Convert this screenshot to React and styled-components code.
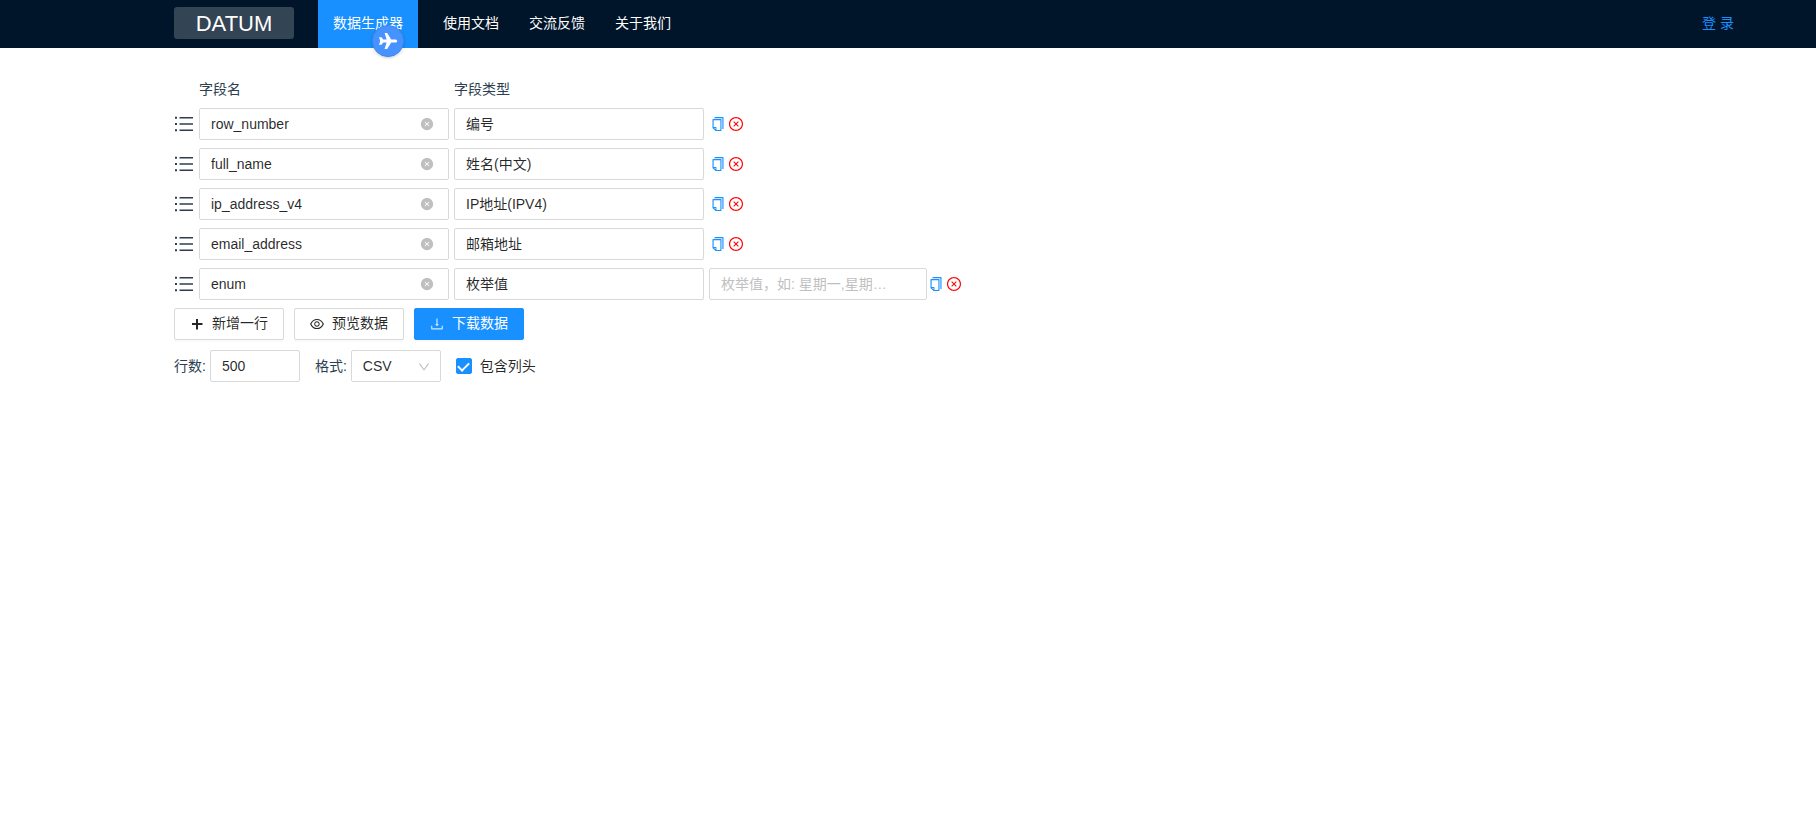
import { useState } from "react";
import styled, { createGlobalStyle } from "styled-components";
import {
  AiOutlineCopy,
  AiOutlineCloseCircle,
  AiFillCloseCircle,
  AiOutlineEye,
  AiOutlineDownload,
  AiOutlineDown,
} from "react-icons/ai";

const GlobalStyle = createGlobalStyle`
  * {
    box-sizing: border-box;
  }
  body {
    margin: 0;
    background: #fff;
    color: #2c3e50;
    font-size: 14px;
    line-height: 22px;
  }
  body, button, input, select {
    font-family: "Liberation Sans", Arial, "Noto Sans CJK SC", sans-serif;
  }
`;

// top bar
const Header = styled.header`
  position: relative;
  display: flex;
  align-items: flex-start;
  height: 48px;
  padding: 0 67px 0 174px;
  background: #001529;
`;
const Logo = styled.div`
  width: 120px;
  height: 32px;
  margin: 7px 24px 0 0;
  border-radius: 3px;
  background: #334454;
  color: #fff;
  font-size: 22px;
  line-height: 34px;
  text-align: center;
`;
const Nav = styled.nav`
  display: flex;
  flex: 1;
`;
const NavLink = styled.a`
  height: 48px;
  padding: 0 15px;
  margin-right: ${(props) => (props.$active ? "10px" : "0")};
  background: ${(props) => (props.$active ? "#1890ff" : "transparent")};
  color: #fff;
  line-height: 46px;
  text-decoration: none;
`;
const LoginButton = styled.button`
  height: 46px;
  padding: 0 15px;
  border: none;
  background: transparent;
  color: #1890ff;
  font-size: 14px;
  line-height: 46px;
  cursor: pointer;
`;
// floats over the menu and hangs below the bar
const FloatButton = styled.button`
  position: absolute;
  top: 25px;
  left: 372px;
  display: flex;
  align-items: center;
  justify-content: center;
  width: 32px;
  height: 32px;
  padding: 0;
  border: 1px solid #3c88f5;
  border-radius: 50%;
  background: #4693ff;
  box-shadow: 0 1px 3px rgba(0, 0, 0, 0.2);
  color: #fff;
  cursor: pointer;
`;

// field editor
const Content = styled.main`
  display: flex;
  flex-direction: column;
  gap: 8px;
  padding: 30px 66px 30px 174px;
`;
const HeadRow = styled.div`
  display: flex;
  gap: 5px;
  padding-left: 25px;
`;
const HeadCell = styled.div`
  width: 250px;
`;
const Row = styled.div`
  display: flex;
  align-items: center;
`;
const Handle = styled.span`
  display: flex;
  margin-right: 5px;
`;
const InputBox = styled.div`
  display: flex;
  align-items: flex-start;
  width: ${(props) => props.$width};
  height: 32px;
  margin-right: ${(props) => props.$gap || "0"};
  padding: 0 11px;
  border: 1px solid #d9d9d9;
  border-radius: 2px;
  background: #fff;
`;
const Input = styled.input`
  flex: 1;
  min-width: 0;
  height: ${(props) => (props.readOnly ? "28px" : "30px")};
  padding: 0;
  border: none;
  outline: none;
  background: transparent;
  color: rgba(0, 0, 0, 0.85);
  font-size: 14px;
  text-overflow: ellipsis;
  &::placeholder {
    color: #bfbfbf;
  }
`;
const IconButton = styled.button`
  display: flex;
  align-self: center;
  margin: ${(props) => props.$margin || "0"};
  padding: 0;
  border: none;
  background: transparent;
  color: ${(props) => props.$color};
  font-size: ${(props) => props.$size};
  cursor: pointer;
`;
const Actions = styled.div`
  display: flex;
  gap: 2px;
  margin-left: 1px;
`;

const ButtonRow = styled.div`
  display: flex;
  gap: 10px;
`;
const Button = styled.button`
  display: flex;
  align-items: center;
  gap: 7px;
  height: 32px;
  padding: 0 15px 0 14px;
  border: 1px solid ${(props) => (props.$primary ? "#1890ff" : "#d9d9d9")};
  border-radius: 2px;
  background: ${(props) => (props.$primary ? "#1890ff" : "#fff")};
  box-shadow: 0 2px 0 rgba(0, 0, 0, 0.02);
  color: ${(props) => (props.$primary ? "#fff" : "rgba(0, 0, 0, 0.85)")};
  font-size: 14px;
  line-height: 28px;
  cursor: pointer;
  svg {
    width: 16px;
    height: 16px;
    opacity: ${(props) => (props.$primary ? 0.8 : 1)};
  }
`;
const ButtonText = styled.span`
  height: 30px;
`;

const Options = styled.div`
  display: flex;
  align-items: center;
  gap: 15px;
  margin-top: 2px;
`;
const Option = styled.div`
  display: flex;
  align-items: center;
  gap: 4px;
`;
const SelectBox = styled.div`
  position: relative;
  width: 90px;
  height: 32px;
  svg {
    position: absolute;
    top: 10px;
    right: 10px;
    color: #bfbfbf;
    font-size: 14px;
    pointer-events: none;
  }
`;
const Select = styled.select`
  appearance: none;
  width: 100%;
  height: 100%;
  padding: 0 11px;
  border: 1px solid #d9d9d9;
  border-radius: 2px;
  background: #fff;
  color: rgba(0, 0, 0, 0.85);
  font-size: 14px;
`;
const CheckLabel = styled.label`
  display: flex;
  align-items: center;
  gap: 8px;
  color: rgba(0, 0, 0, 0.85);
`;
const Checkbox = styled.input`
  appearance: none;
  display: grid;
  place-items: center;
  width: 16px;
  height: 16px;
  margin: 0;
  border: 1px solid #d9d9d9;
  border-radius: 2px;
  &:checked {
    border-color: #1890ff;
    background: #1890ff;
  }
  &:checked::after {
    content: "";
    width: 5px;
    height: 9px;
    margin-bottom: 2px;
    border: 2px solid #fff;
    border-top: 0;
    border-left: 0;
    transform: rotate(45deg);
  }
`;

const menu = ["数据生成器", "使用文档", "交流反馈", "关于我们"];

const initialFields = [
  { id: 1, name: "row_number", type: "编号" },
  { id: 2, name: "full_name", type: "姓名(中文)" },
  { id: 3, name: "ip_address_v4", type: "IP地址(IPV4)" },
  { id: 4, name: "email_address", type: "邮箱地址" },
  { id: 5, name: "enum", type: "枚举值", hint: "枚举值，如: 星期一,星期…" },
];

const PlaneIcon = () => (
  <svg width="20" height="18" viewBox="0 0 20 18" fill="currentColor">
    <path d="M19.200 9c0 1-.9 1.600-2 1.600h-4L9.200 17H6.600l2-6.400H5.200L3.600 12.800H1L2.200 9 1 5.200h2.600l1.600 2.200h3.400L6.600 1h2.600l4 6.400h4c1.100 0 2 .6 2 1.600z" />
  </svg>
);

const ListIcon = () => (
  <svg width="20" height="20" viewBox="0 0 20 20" fill="currentColor">
    <path d="M1 2.700h2v2H1zM1 9h2v2H1zM1 15.200h2v2H1z" />
    <path d="M5.500 2.900H19v1.600H5.500zM5.500 9.200H19v1.600H5.500zM5.500 15.400H19V17H5.500z" />
  </svg>
);

const PlusIcon = () => (
  <svg viewBox="0 0 16 16" fill="currentColor">
    <path d="M7 3h2v4h4.500v2H9v4.500H7V9H3V7h4z" />
  </svg>
);

const FieldRow = ({ field, onRename, onCopy, onRemove }) => {
  return (
    <Row>
      <Handle>
        <ListIcon />
      </Handle>
      <InputBox $width="250px" $gap="5px">
        <Input
          aria-label="字段名"
          value={field.name}
          onChange={(e) => onRename(field.id, e.target.value)}
        />
        <IconButton
          aria-label="清空"
          $color="#bfbfbf"
          $size="14px"
          $margin="0 3px 0 0"
          onClick={() => onRename(field.id, "")}
        >
          <AiFillCloseCircle />
        </IconButton>
      </InputBox>
      <InputBox $width="250px" $gap="5px">
        <Input aria-label="字段类型" value={field.type} readOnly />
      </InputBox>
      {field.hint && (
        <InputBox $width="218px">
          <Input aria-label="枚举值" placeholder={field.hint} />
        </InputBox>
      )}
      <Actions>
        <IconButton aria-label="复制" $color="#1890ff" $size="16px" onClick={() => onCopy(field)}>
          <AiOutlineCopy />
        </IconButton>
        <IconButton aria-label="删除" $color="#ff0000" $size="16px" onClick={() => onRemove(field.id)}>
          <AiOutlineCloseCircle />
        </IconButton>
      </Actions>
    </Row>
  );
};

export default function App() {
  const [fields, setFields] = useState(initialFields);

  const rename = (id, name) =>
    setFields(fields.map((f) => (f.id === id ? { ...f, name } : f)));
  const copy = (field) => setFields([...fields, { ...field, id: Date.now() }]);
  const remove = (id) => setFields(fields.filter((f) => f.id !== id));
  const add = () => setFields([...fields, { id: Date.now(), name: "", type: "" }]);

  return (
    <>
      <GlobalStyle />
      <Header>
        <Logo>DATUM</Logo>
        <Nav>
          {menu.map((item, i) => (
            <NavLink key={item} href="#" $active={i === 0}>
              {item}
            </NavLink>
          ))}
        </Nav>
        <LoginButton>登 录</LoginButton>
        <FloatButton aria-label="飞机">
          <PlaneIcon />
        </FloatButton>
      </Header>
      <Content>
        <HeadRow>
          <HeadCell>字段名</HeadCell>
          <HeadCell>字段类型</HeadCell>
        </HeadRow>
        {fields.map((field) => (
          <FieldRow
            key={field.id}
            field={field}
            onRename={rename}
            onCopy={copy}
            onRemove={remove}
          />
        ))}
        <ButtonRow>
          <Button onClick={add}>
            <PlusIcon />
            <ButtonText>新增一行</ButtonText>
          </Button>
          <Button>
            <AiOutlineEye />
            <ButtonText>预览数据</ButtonText>
          </Button>
          <Button $primary>
            <AiOutlineDownload />
            <ButtonText>下载数据</ButtonText>
          </Button>
        </ButtonRow>
        <Options>
          <Option>
            <label htmlFor="rows">行数:</label>
            <InputBox $width="90px">
              <Input id="rows" defaultValue="500" />
            </InputBox>
          </Option>
          <Option>
            <label htmlFor="format">格式:</label>
            <SelectBox>
              <Select id="format" defaultValue="CSV">
                <option>CSV</option>
                <option>JSON</option>
                <option>SQL</option>
              </Select>
              <AiOutlineDown />
            </SelectBox>
          </Option>
          <CheckLabel>
            <Checkbox type="checkbox" defaultChecked />
            包含列头
          </CheckLabel>
        </Options>
      </Content>
    </>
  );
}
